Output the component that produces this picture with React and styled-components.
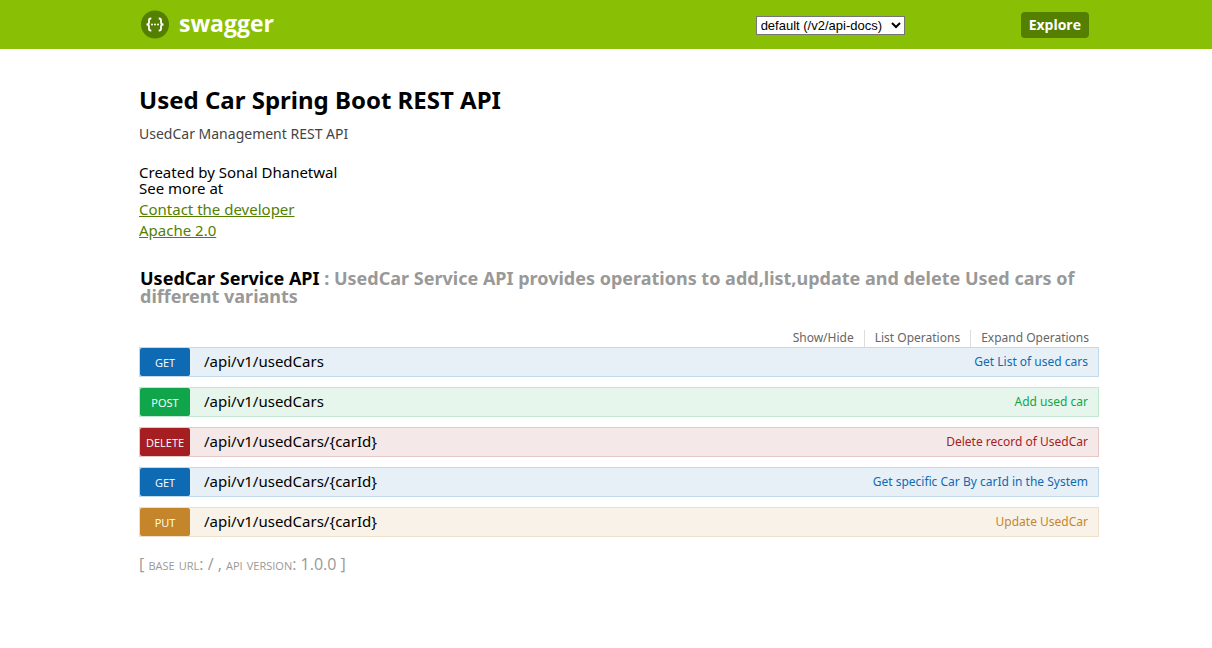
import React from "react";
import styled, { createGlobalStyle } from "styled-components";

const GlobalStyle = createGlobalStyle`
  * { box-sizing: border-box; }
  body {
    margin: 0;
    background: #fff;
    color: #000;
    font-family: "Noto Sans", "Open Sans", sans-serif;
    font-size: 15px;
  }
`;

const Header = styled.header`
  background: #89bf04;
  padding: 0 16px 0 42px;
`;

const HeaderInner = styled.div`
  display: flex;
  align-items: center;
  justify-content: space-between;
  max-width: 960px;
  height: 49px;
  margin: 0 auto;
  padding-right: 10px;
`;

const Brand = styled.a`
  display: flex;
  align-items: center;
  gap: 10px;
  padding-left: 1px;
  color: #fff;
  font-family: "Open Sans", "Noto Sans", sans-serif;
  font-size: 23px;
  font-weight: 700;
  line-height: 28px;
  text-decoration: none;
`;

const BrandName = styled.span`
  padding-bottom: 3px;
`;

const Controls = styled.form`
  display: flex;
  align-items: center;
  gap: 116px;
`;

const SpecSelect = styled.select`
  width: 149px;
  height: 19px;
  margin-top: 1px;
  border: 1px solid #767676;
  border-radius: 0;
  background: #fff;
  color: #000;
  font: 13px "Liberation Sans", sans-serif;
`;

const ExploreButton = styled.button`
  height: 26px;
  padding: 0 8px;
  border: 0;
  border-radius: 4px;
  background: #547f00;
  color: #fff;
  font: 700 14px/26px "Open Sans", "Noto Sans", sans-serif;
`;

const Main = styled.main`
  padding: 35px 16px 32px 42px;
`;

const Content = styled.div`
  max-width: 960px;
  margin: 0 auto;
`;

const Title = styled.h1`
  margin: 0;
  font-size: 24px;
  font-weight: 700;
  line-height: 32px;
`;

const Description = styled.p`
  margin: 10px 0 22px;
  color: #444;
  font-size: 14px;
  line-height: 16px;
`;

const InfoLine = styled.div`
  line-height: 16px;
`;

const InfoLinks = styled.div`
  margin: 3px 0 28px;
`;

const InfoLink = styled.a`
  display: table;
  color: #547f00;
  line-height: 21px;
`;

const ResourceTitle = styled.h2`
  margin: 0 0 25px;
  padding-left: 1px;
  color: #999;
  font-size: 18px;
  font-weight: 700;
  line-height: 18px;
`;

const ResourceLink = styled.a`
  color: #000;
  text-decoration: none;
`;

const Options = styled.ul`
  display: flex;
  justify-content: flex-end;
  margin: 0;
  padding: 0;
  list-style: none;
`;

const Option = styled.li`
  padding: 0 10px 1px;
  border-left: 1px solid #ddd;
  font-size: 12px;
  line-height: 16px;
  &:first-child { border-left: 0; }
`;

const OptionLink = styled.a`
  color: #666;
  text-decoration: none;
`;

const Operations = styled.ul`
  display: flex;
  flex-direction: column;
  gap: 10px;
  margin: 0;
  padding: 0;
  list-style: none;
`;

const palette = {
  GET: { main: "#0f6ab4", back: "#e7f0f7", line: "#c3d9ec" },
  POST: { main: "#10a54a", back: "#e7f6ec", line: "#c3e8d1" },
  DELETE: { main: "#a41e22", back: "#f5e8e8", line: "#e8c6c7" },
  PUT: { main: "#c5862b", back: "#f9f2e9", line: "#f0e0ca" },
};

const Operation = styled.li`
  display: flex;
  align-items: flex-start;
  height: 30px;
  padding-right: 10px;
  border: 1px solid ${(p) => palette[p.$method].line};
  background: ${(p) => palette[p.$method].back};
`;

const Method = styled.a`
  width: 50px;
  height: 28px;
  padding-top: 2px;
  border-radius: 2px;
  background: ${(p) => palette[p.$method].main};
  color: #fff;
  font-family: "Open Sans", "Noto Sans", sans-serif;
  font-size: 11px;
  line-height: 26px;
  text-align: center;
  text-decoration: none;
`;

const Path = styled.a`
  flex: 1;
  padding-left: 14px;
  color: #000;
  line-height: 26px;
  text-decoration: none;
`;

const Summary = styled.a`
  color: ${(p) => palette[p.$method].main};
  font-size: 12px;
  line-height: 28px;
  text-decoration: none;
`;

const Footer = styled.footer`
  margin-top: 17px;
  color: #999;
  font-family: "Open Sans", "Noto Sans", sans-serif;
  font-size: 16px;
  line-height: 20px;
`;

const SmallCaps = styled.span`
  font-variant: small-caps;
`;

const operations = [
  ["GET", "/api/v1/usedCars", "Get List of used cars"],
  ["POST", "/api/v1/usedCars", "Add used car"],
  ["DELETE", "/api/v1/usedCars/{carId}", "Delete record of UsedCar"],
  ["GET", "/api/v1/usedCars/{carId}", "Get specific Car By carId in the System"],
  ["PUT", "/api/v1/usedCars/{carId}", "Update UsedCar"],
];

function Logo() {
  return (
    <svg width="29" height="29" viewBox="0 0 29 29" aria-hidden="true">
      <circle cx="15" cy="14.5" r="14" fill="#547f00" />
      <g fill="none" stroke="#fff" strokeWidth="1.8">
        <path d="M11.3 8.5H10.8Q9 8.5 9 10.3V12.2Q9 14.5 6.5 14.5Q9 14.5 9 16.8V18.7Q9 20.5 10.8 20.5H11.3" />
        <path d="M18.7 8.5H19.2Q21 8.5 21 10.3V12.2Q21 14.5 23.5 14.5Q21 14.5 21 16.8V18.7Q21 20.5 19.2 20.5H18.7" />
      </g>
      <g fill="#fff">
        <circle cx="12" cy="14.5" r="1" />
        <circle cx="15" cy="14.5" r="1" />
        <circle cx="18" cy="14.5" r="1" />
      </g>
    </svg>
  );
}

export default function App() {
  return (
    <>
      <GlobalStyle />
      <Header>
        <HeaderInner>
          <Brand href="#">
            <Logo />
            <BrandName>swagger</BrandName>
          </Brand>
          <Controls onSubmit={(e) => e.preventDefault()}>
            <SpecSelect aria-label="API specification">
              <option>default (/v2/api-docs)</option>
            </SpecSelect>
            <ExploreButton type="submit">Explore</ExploreButton>
          </Controls>
        </HeaderInner>
      </Header>
      <Main>
        <Content>
          <Title>Used Car Spring Boot REST API</Title>
          <Description>UsedCar Management REST API</Description>
          <InfoLine>Created by Sonal Dhanetwal</InfoLine>
          <InfoLine>See more at</InfoLine>
          <InfoLinks>
            <InfoLink href="#contact">Contact the developer</InfoLink>
            <InfoLink href="#license">Apache 2.0</InfoLink>
          </InfoLinks>
          <ResourceTitle>
            <ResourceLink href="#service">UsedCar Service API</ResourceLink> : UsedCar Service API
            provides operations to add,list,update and delete Used cars of different variants
          </ResourceTitle>
          <Options>
            {["Show/Hide", "List Operations", "Expand Operations"].map((label) => (
              <Option key={label}>
                <OptionLink href="#service">{label}</OptionLink>
              </Option>
            ))}
          </Options>
          <Operations>
            {operations.map(([method, path, summary]) => (
              <Operation key={method + path} $method={method}>
                <Method href="#operation" $method={method}>{method}</Method>
                <Path href="#operation">{path}</Path>
                <Summary href="#operation" $method={method}>{summary}</Summary>
              </Operation>
            ))}
          </Operations>
          <Footer>
            [ <SmallCaps>base url</SmallCaps>: / , <SmallCaps>api version</SmallCaps>: 1.0.0 ]
          </Footer>
        </Content>
      </Main>
    </>
  );
}
